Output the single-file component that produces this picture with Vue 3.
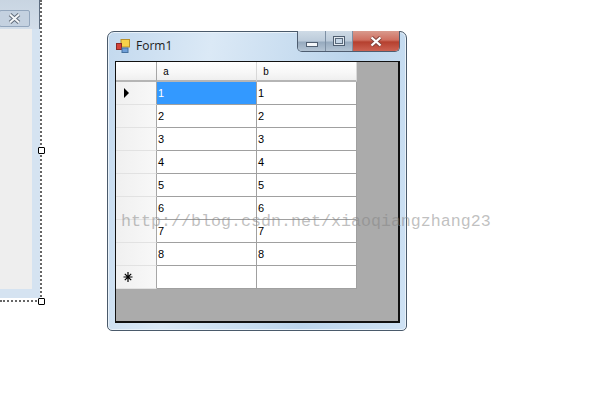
<template>
  <div class="page">
    <!-- designer form, mostly off the left edge -->
    <div class="designer">
      <div class="designer-title">
        <div class="designer-close">
          <svg width="13" height="11" viewBox="0 0 13 11">
            <path d="M2 1.5 L11 9.5 M11 1.5 L2 9.5" stroke="#5f6a78" stroke-width="3.8" fill="none" />
            <path d="M2 1.5 L11 9.5 M11 1.5 L2 9.5" stroke="#f4f6f8" stroke-width="2" fill="none" />
          </svg>
        </div>
      </div>
      <div class="designer-body"></div>
    </div>
    <span class="handle handle-mid"></span>
    <span class="handle handle-corner"></span>

    <div class="window">
      <div class="titlebar">
        <svg class="app-icon" width="14" height="14" viewBox="0 0 14 14">
          <rect x="5" y="0.5" width="8.5" height="7.5" fill="#f7d24a" stroke="#b8902a" />
          <rect x="0.5" y="4.5" width="5" height="6" fill="#d4433a" stroke="#8c2a26" />
          <rect x="6" y="9" width="6" height="4.5" fill="#6f9fd8" stroke="#44709f" />
        </svg>
        <span class="title">Form1</span>
        <div class="controls">
          <div class="ctl ctl-min"><span class="min-glyph"></span></div>
          <div class="ctl ctl-max"><span class="max-glyph"></span></div>
          <div class="ctl ctl-close">
            <svg width="14" height="11" viewBox="0 0 14 11">
              <path d="M2.5 1.5 L11.5 9.5 M11.5 1.5 L2.5 9.5" stroke="#84463f" stroke-width="4.2" fill="none" />
              <path d="M2.5 1.5 L11.5 9.5 M11.5 1.5 L2.5 9.5" stroke="#ffffff" stroke-width="2.3" fill="none" />
            </svg>
          </div>
        </div>
      </div>
      <div class="client">
        <div class="grid">
          <div class="corner"></div>
          <div class="colhead" v-for="col in columns" :key="col">{{ col }}</div>
          <template v-for="(row, i) in rows" :key="i">
            <div class="rowhead">
              <svg v-if="i === 0" width="7" height="10" viewBox="0 0 7 10">
                <path d="M1 0 L6 5 L1 10 Z" fill="#000" />
              </svg>
              <svg v-if="row === ''" width="10" height="10" viewBox="0 0 10 10">
                <path d="M5 0 V10 M0.5 5 H9.5 M1.8 1.8 L8.2 8.2 M8.2 1.8 L1.8 8.2" stroke="#000" stroke-width="1.2" fill="none" />
              </svg>
            </div>
            <div class="cell" :class="{ selected: i === 0 }">{{ row }}</div>
            <div class="cell">{{ row }}</div>
          </template>
        </div>
      </div>
    </div>

    <div class="watermark">http://blog.csdn.net/xiaoqiangzhang23</div>
  </div>
</template>

<script setup>
const columns = ["a", "b"];
const rows = ["1", "2", "3", "4", "5", "6", "7", "8", ""];
</script>

<style>
html,
body {
  background: #fff;
}
</style>

<style scoped>
.page {
  position: relative;
  width: 597px;
  height: 420px;
  overflow: hidden;
  background: #fff;
  font-family: "Liberation Sans", Arial, sans-serif;
}

.designer {
  position: absolute;
  left: -40px;
  top: -6px;
  width: 80px;
  height: 304px;
  display: flex;
  flex-direction: column;
  box-sizing: border-box;
  border-top-right-radius: 6px;
  background: #d5e3f1;
}
.designer-title {
  height: 35px;
  flex: none;
  display: flex;
  justify-content: flex-end;
  align-items: flex-start;
  padding: 16px 9px 0 0;
  box-sizing: border-box;
  border-top-right-radius: 6px;
  border-right: 1px solid #5d6d80;
  background: linear-gradient(#c6d3e0, #d3deea);
}
.designer-close {
  width: 31px;
  height: 17px;
  box-sizing: border-box;
  border: 1px solid #93a6bd;
  border-radius: 2px;
  background: #c4d1e0;
  display: flex;
  align-items: center;
  justify-content: center;
}
.designer-body {
  height: 260px;
  margin-right: 8px;
  background: #eeeeee;
}

.handle {
  position: absolute;
  left: 38px;
  width: 7px;
  height: 7px;
  box-sizing: border-box;
  border: 1px solid #000;
  border-radius: 1px;
  background: #fff;
  z-index: 1;
}
.handle-mid {
  top: 147px;
}
.handle-corner {
  top: 298px;
}
.page::before {
  content: "";
  position: absolute;
  left: 40px;
  top: 0;
  height: 301px;
  border-left: 2px dotted #666;
}
.page::after {
  content: "";
  position: absolute;
  left: 0;
  top: 300px;
  width: 41px;
  border-top: 2px dotted #666;
}

.window {
  position: absolute;
  left: 107px;
  top: 31px;
  width: 300px;
  height: 300px;
  box-sizing: border-box;
  border: 1px solid #4a5a6b;
  border-radius: 7px 7px 5px 5px;
  background: linear-gradient(100deg, #c3d9ee 0%, #dbe9f6 30%, #bcd5ec 70%, #cfe2f4 100%);
  box-shadow: inset 0 0 0 1px #e9f2fa;
  display: flex;
  flex-direction: column;
}

.titlebar {
  height: 29px;
  flex: none;
  display: flex;
  align-items: center;
  padding-left: 8px;
  position: relative;
}
.app-icon {
  margin-top: -2px;
}
.title {
  margin-left: 6px;
  margin-top: -2px;
  font-family: "Open Sans", "Liberation Sans", sans-serif;
  font-size: 12px;
  color: #1c1c1c;
}
.controls {
  position: absolute;
  right: 6px;
  top: -1px;
  display: flex;
  height: 20px;
  border: 1px solid #4e5d70;
  border-top: 0;
  border-radius: 0 0 5px 5px;
  overflow: hidden;
}
.ctl {
  display: flex;
  align-items: center;
  justify-content: center;
  box-sizing: border-box;
  background: linear-gradient(#cfdbe6 0%, #bccbda 50%, #96aabe 55%, #b4c4d4 100%);
}
.ctl-min {
  width: 28px;
  border-right: 1px solid #7e90a4;
}
.ctl-max {
  width: 27px;
  border-right: 1px solid #7e90a4;
}
.ctl-close {
  width: 46px;
  background: linear-gradient(#d99a8d 0%, #cf6f60 45%, #b5402f 55%, #cc6252 100%);
}
.min-glyph {
  width: 12px;
  height: 5px;
  margin-top: 7px;
  box-sizing: border-box;
  border: 1px solid #4f5e70;
  background: #f4f7fa;
}
.max-glyph {
  width: 12px;
  height: 10px;
  box-sizing: border-box;
  border: 1px solid #4f5e70;
  background: #c6d6e6;
  box-shadow: inset 0 0 0 1px #e2e9f0, inset 0 0 0 2px #5a6a7c;
}

.client {
  width: 285px;
  height: 262px;
  margin-left: 7px;
  box-sizing: border-box;
  border: 2px solid #111;
  border-width: 1px 2px 2px 1px;
  background: #ababab;
}

.grid {
  display: grid;
  grid-template-columns: 41px 100px 100px;
  grid-template-rows: 20px repeat(9, 23px);
  width: 241px;
  font-size: 11px;
  color: #000;
}
.corner,
.colhead {
  box-sizing: border-box;
  background: linear-gradient(#ffffff, #f7f7f7 60%, #efefef);
  border-bottom: 2px solid #b5b5b5;
}
.corner,
.rowhead {
  border-right: 1px solid #a6a6a6;
}
.colhead {
  border-right: 1px solid #d8d8d8;
  padding: 5px 0 0 6px;
  font-family: "Liberation Mono", monospace;
  font-size: 10px;
  line-height: 12px;
}
.rowhead {
  box-sizing: border-box;
  display: flex;
  align-items: center;
  padding-left: 7px;
  background: linear-gradient(90deg, #f0f0f0, #f8f8f8);
  border-bottom: 1px solid #e2e2e2;
}
.cell {
  box-sizing: border-box;
  background: #fff;
  border-right: 1px solid #a0a0a0;
  border-bottom: 1px solid #a0a0a0;
  padding: 5px 0 0 1px;
  line-height: 12px;
}
.cell.selected {
  background: #3399ff;
  color: #fff;
}

.watermark {
  position: absolute;
  left: 121px;
  top: 212px;
  font-family: "Liberation Mono", monospace;
  font-size: 16.67px;
  line-height: 20px;
  color: rgba(130, 130, 130, 0.5);
  white-space: nowrap;
  pointer-events: none;
}
</style>
